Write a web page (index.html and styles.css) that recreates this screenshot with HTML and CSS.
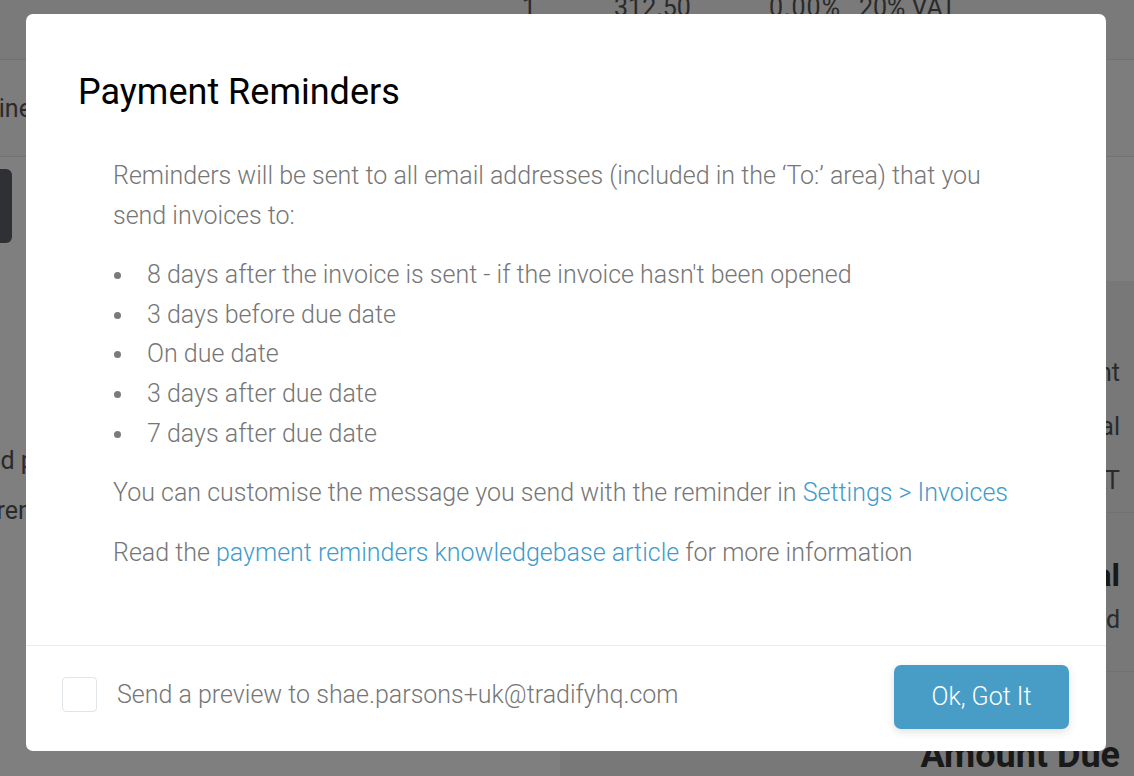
FILE: index.html
```html
<!DOCTYPE html>
<html lang="en">
<head>
<meta charset="utf-8">
<title>Payment Reminders</title>
<link rel="stylesheet" href="styles.css">
</head>
<body>
<div class="page">
  <div class="row-top">
    <span class="c-qty">1</span>
    <span class="c-price">312.50</span>
    <span class="c-disc">0.00%</span>
    <span class="c-tax">20% VAT</span>
  </div>
  <div class="row-line"><span>Add line</span></div>
  <div class="main">
    <div class="left-col">
      <div class="dark-btn"></div>
      <p class="left-a">Add payment</p>
      <p class="left-b">Current</p>
    </div>
    <div class="right-col">
      <div class="totals">
        <div class="t-line">Discount</div>
        <div class="t-line">Subtotal</div>
        <div class="t-line">VAT</div>
      </div>
      <div class="totals2">
        <div class="t-big">Total</div>
        <div class="t-line">Paid</div>
      </div>
      <div class="totals3">
        <div class="t-due">Amount Due</div>
      </div>
    </div>
  </div>
</div>

<div class="overlay">
  <div class="modal">
    <h2 class="modal-title">Payment Reminders</h2>
    <div class="modal-body">
      <p>Reminders will be sent to all email addresses (included in the ‘To:’ area) that you send invoices to:</p>
      <ul>
        <li>8 days after the invoice is sent - if the invoice hasn't been opened</li>
        <li>3 days before due date</li>
        <li>On due date</li>
        <li>3 days after due date</li>
        <li>7 days after due date</li>
      </ul>
      <p>You can customise the message you send with the reminder in <a href="#">Settings &gt; Invoices</a></p>
      <p>Read the <a href="#">payment reminders knowledgebase article</a> for more information</p>
    </div>
    <div class="modal-footer">
      <label class="preview">
        <span class="checkbox"></span>
        <span class="preview-text">Send a preview to shae.parsons+uk@tradifyhq.com</span>
      </label>
      <button class="btn-ok">Ok, Got It</button>
    </div>
  </div>
</div>
</body>
</html>
```

FILE: styles.css
```css
* { box-sizing: border-box; }
html, body { margin: 0; padding: 0; }
body {
  width: 1134px;
  height: 776px;
  overflow: hidden;
  font-family: Roboto, "Liberation Sans", sans-serif;
  background: #fff;
}

/* underlying page */
.page {
  width: 1134px;
  height: 776px;
  display: flex;
  flex-direction: column;
  color: #555;
}
.row-top {
  height: 60px;
  flex: none;
  background: #f4f4f4;
  border-bottom: 1px solid #e2e2e2;
  display: flex;
  align-items: flex-start;
  font-size: 25px;
  line-height: 25px;
}
.row-top span { margin-top: -5px; }
.c-qty { margin-left: 522px; }
.c-price { margin-left: 78px; }
.c-disc { margin-left: 78px; letter-spacing: 1px; }
.c-tax { margin-left: 18px; }
.row-line {
  height: 97px;
  flex: none;
  border-bottom: 1px solid #e2e2e2;
  display: flex;
  align-items: center;
  font-size: 25px;
  background: #fbfbfb;
}
.row-line span { margin-left: -58px; }
.main {
  flex: 1;
  display: flex;
}
.left-col {
  width: 560px;
}
.dark-btn {
  margin-top: 12px;
  margin-left: -40px;
  width: 52px;
  height: 74px;
  border-radius: 6px;
  background: #5d6166;
}
.left-a, .left-b {
  margin: 0;
  font-size: 25px;
  white-space: nowrap;
  line-height: 30px;
}
.left-a { margin-top: 203px; margin-left: -30px; }
.left-b { margin-top: 20px; margin-left: -42px; }
.right-col {
  flex: 1;
  display: flex;
  flex-direction: column;
  padding-top: 124px;
}
.totals {
  background: #f1f1f1;
  padding: 65px 14px 0 0;
  border-bottom: 1px solid #e2e2e2;
  text-align: right;
  font-size: 25px;
  height: 232px;
}
.totals .t-line { line-height: 54px; height: 54px; }
.totals2 {
  background: #f1f1f1;
  height: 159px;
  border-bottom: 1px solid #e2e2e2;
  text-align: right;
  padding: 40px 14px 0 0;
  font-size: 25px;
}
.t-big { font-size: 32px; font-weight: 700; color: #333; line-height: 44px; }
.totals2 .t-line { line-height: 46px; }
.totals3 {
  background: #f1f1f1;
  flex: 1;
  text-align: right;
  padding: 62px 14px 0 0;
}
.t-due { font-size: 36px; font-weight: 700; color: #333; }

/* overlay + modal */
.overlay {
  position: fixed;
  inset: 0;
  background: rgba(0, 0, 0, 0.5);
}
.modal {
  position: absolute;
  left: 26px;
  top: 14px;
  width: 1080px;
  height: 737px;
  background: #fff;
  border-radius: 7px;
  display: flex;
  flex-direction: column;
}
.modal-title {
  margin: 0;
  padding: 56px 52px 0;
  font-size: 36px;
  line-height: 44px;
  font-weight: 400;
  color: #000;
}
.modal-body {
  flex: 1;
  padding: 42px 87px 0 87px;
  font-size: 25px;
  line-height: 39.6px;
  font-weight: 300;
  color: #767676;
}
.modal-body p { margin: 0 0 20px; }
.modal-body p:last-child { margin-bottom: 0; }
.modal-body ul { margin: 0 0 20px; padding-left: 34px; list-style: none; }
.modal-body li { position: relative; }
.modal-body li::before {
  content: "";
  position: absolute;
  left: -33px;
  top: 17px;
  width: 7px;
  height: 7px;
  border-radius: 50%;
  background: #7a7a7a;
}
.modal-body a { color: #3f9bcb; text-decoration: none; }
.modal-footer {
  height: 106px;
  border-top: 1px solid #e9ecee;
  display: flex;
  align-items: center;
  justify-content: space-between;
  padding: 0 37px 0 36px;
}
.preview {
  display: flex;
  align-items: center;
  gap: 20px;
  margin-top: -8px;
}
.checkbox {
  width: 35px;
  height: 35px;
  border: 1px solid #dfe5e8;
  border-radius: 4px;
  background: #fff;
}
.preview-text {
  font-size: 25px;
  font-weight: 300;
  color: #767676;
}
.btn-ok {
  width: 175px;
  height: 64px;
  border: 0;
  border-radius: 7px;
  background: #479dc5;
  color: #fff;
  font-family: Roboto, "Liberation Sans", sans-serif;
  font-size: 25px;
  font-weight: 300;
  box-shadow: 0 3px 8px rgba(0, 0, 0, 0.12);
  margin-top: -4px;
}
```
